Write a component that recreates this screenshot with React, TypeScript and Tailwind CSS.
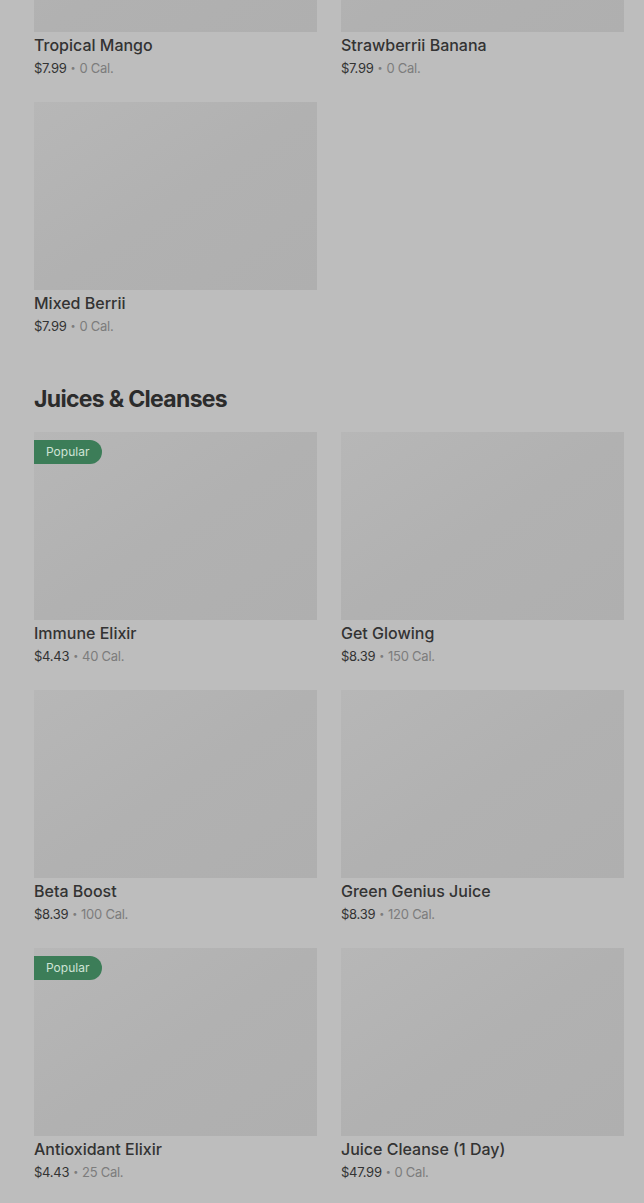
import React from "react";

type Item = { name: string; price: string; cal: string; popular?: boolean };

const smoothies: Item[] = [
  { name: "Tropical Mango", price: "$7.99", cal: "0 Cal." },
  { name: "Strawberrii Banana", price: "$7.99", cal: "0 Cal." },
  { name: "Mixed Berrii", price: "$7.99", cal: "0 Cal." },
];

const juices: Item[] = [
  { name: "Immune Elixir", price: "$4.43", cal: "40 Cal.", popular: true },
  { name: "Get Glowing", price: "$8.39", cal: "150 Cal." },
  { name: "Beta Boost", price: "$8.39", cal: "100 Cal." },
  { name: "Green Genius Juice", price: "$8.39", cal: "120 Cal." },
  { name: "Antioxidant Elixir", price: "$4.43", cal: "25 Cal.", popular: true },
  { name: "Juice Cleanse (1 Day)", price: "$47.99", cal: "0 Cal." },
];

function Card({ item }: { item: Item }) {
  return (
    <div>
      <div className="relative h-[188px] bg-gradient-to-br from-[#b7b7b7] via-[#b1b1b1] to-[#afafaf]">
        {item.popular && (
          <span className="absolute left-0 top-[8px] flex h-[24px] items-center rounded-r-full bg-[#3c7d58] pl-[12px] pr-[13px] text-[12px] text-[#cfe3d6]">
            Popular
          </span>
        )}
      </div>
      <div className="mt-[3px] h-[20px] text-[16px] leading-[20px] font-medium text-[#333333]">{item.name}</div>
      <div className="mt-[3px] flex h-[20px] items-center gap-[4px] text-[13px] leading-[20px] tracking-[-0.02em]">
        <span className="text-[#333333]">{item.price}</span>
        <span className="text-[9px] leading-[20px] text-[#7c7c7c]">•</span>
        <span className="text-[#7c7c7c]">{item.cal}</span>
      </div>
    </div>
  );
}

export default function App() {
  return (
    <div
      className="h-[1203px] overflow-hidden bg-[#bdbdbd]"
      style={{ fontFamily: "Inter, 'Noto Sans', sans-serif" }}
    >
      <div className="-mt-[156px] pl-[34px] pr-[20px]">
        <div className="grid grid-cols-2 gap-x-6 gap-y-6">
          {smoothies.map((it) => (
            <Card key={it.name} item={it} />
          ))}
        </div>

        <h2 className="mt-[47px] mb-[17px] text-[23px] leading-[32px] font-bold tracking-[-0.03em] text-[#2c2c2c]">
          Juices &amp; Cleanses
        </h2>

        <div className="grid grid-cols-2 gap-x-6 gap-y-6">
          {juices.map((it) => (
            <Card key={it.name} item={it} />
          ))}
        </div>
      </div>
    </div>
  );
}
